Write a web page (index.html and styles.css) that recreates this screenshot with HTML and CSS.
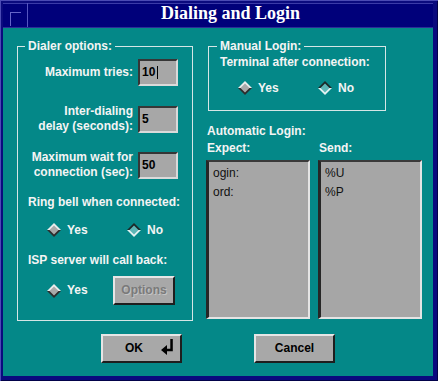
FILE: index.html
```html
<!DOCTYPE html>
<html>
<head>
<meta charset="utf-8">
<title>Dialing and Login</title>
<link rel="stylesheet" href="styles.css">
</head>
<body>
<div class="window">
  <div class="titlebar">
    <div class="menubtn"><span class="menuglyph"></span></div>
    <div class="title">Dialing and Login</div>
  </div>
  <div class="content">
    <div class="columns">
      <fieldset class="group dialer">
        <legend>Dialer options:</legend>
        <div class="field f1"><label>Maximum tries:</label><div class="entry">10<span class="caret"></span></div></div>
        <div class="field f2"><label>Inter-dialing<br>delay (seconds):</label><div class="entry">5</div></div>
        <div class="field f3"><label>Maximum wait for<br>connection (sec):</label><div class="entry">50</div></div>
        <div class="caption ring">Ring bell when connected:</div>
        <div class="radios r1">
          <span class="radio"><svg class="dia" width="14" height="14" viewBox="0 0 14 14"><polygon points="0,7 7,0 14,7" fill="#ececec"/><polygon points="0,7 7,14 14,7" fill="#2c2c2c"/><polygon points="7,2.5 11.5,7 7,11.5 2.5,7" fill="#a9a9a9"/></svg>Yes</span>
          <span class="radio"><svg class="dia" width="14" height="14" viewBox="0 0 14 14"><polygon points="0,7 7,0 14,7" fill="#1c2828"/><polygon points="0,7 7,14 14,7" fill="#e4f2f2"/><polygon points="7,2.5 11.5,7 7,11.5 2.5,7" fill="#5cb6b6"/></svg>No</span>
        </div>
        <div class="caption isp">ISP server will call back:</div>
        <div class="radios r2">
          <span class="radio"><svg class="dia" width="14" height="14" viewBox="0 0 14 14"><polygon points="0,7 7,0 14,7" fill="#ececec"/><polygon points="0,7 7,14 14,7" fill="#2c2c2c"/><polygon points="7,2.5 11.5,7 7,11.5 2.5,7" fill="#a9a9a9"/></svg>Yes</span>
          <span class="btn options">Options</span>
        </div>
      </fieldset>
      <div class="right">
        <fieldset class="group manual">
          <legend>Manual Login:</legend>
          <div class="caption">Terminal after connection:</div>
          <div class="radios r3">
            <span class="radio"><svg class="dia" width="14" height="14" viewBox="0 0 14 14"><polygon points="0,7 7,0 14,7" fill="#ececec"/><polygon points="0,7 7,14 14,7" fill="#2c2c2c"/><polygon points="7,2.5 11.5,7 7,11.5 2.5,7" fill="#a9a9a9"/></svg>Yes</span>
            <span class="radio"><svg class="dia" width="14" height="14" viewBox="0 0 14 14"><polygon points="0,7 7,0 14,7" fill="#1c2828"/><polygon points="0,7 7,14 14,7" fill="#e4f2f2"/><polygon points="7,2.5 11.5,7 7,11.5 2.5,7" fill="#5cb6b6"/></svg>No</span>
          </div>
        </fieldset>
        <div class="caption auto">Automatic Login:</div>
        <div class="lists">
          <div class="listlabel">Expect:</div>
          <div class="listlabel">Send:</div>
          <div class="listbox"><div class="item">ogin:</div><div class="item">ord:</div></div>
          <div class="listbox"><div class="item">%U</div><div class="item">%P</div></div>
        </div>
      </div>
    </div>
    <div class="buttons">
      <span class="btn ok">OK<svg class="enter" width="12" height="16" viewBox="0 0 12 16"><polygon points="0,11 6,6 6,9.7 9.3,9.7 9.3,0 11.8,0 11.8,12.3 6,12.3 6,16" fill="#000"/></svg></span>
      <span class="btn cancel">Cancel</span>
    </div>
  </div>
</div>
</body>
</html>
```

FILE: styles.css
```css
* { box-sizing: border-box; }
html, body { margin: 0; padding: 0; background: #0a0a7e; }
body {
  width: 438px;
  height: 381px;
  overflow: hidden;
  font-family: "Liberation Sans", Arial, sans-serif;
  font-size: 12px;
  line-height: 15px;
}
.window {
  width: 438px;
  height: 381px;
  background: #0a0a7e;
  padding: 3px 5px 5px 3px;
  display: flex;
  flex-direction: column;
  box-shadow: inset 1px 1px 0 #4a4ab4, inset -1px -1px 0 #02024a;
}
.titlebar {
  flex: none;
  height: 25px;
  display: flex;
  background: #00007a;
  border-bottom: 1px solid #2c2c98;
  box-shadow: inset 0 1px 0 #3a3aa8;
}
.menubtn {
  flex: none;
  width: 25px;
  border-right: 1px solid #5656c0;
  padding: 9px 0 0 7px;
}
.menuglyph {
  display: block;
  width: 11px;
  height: 14px;
  border-top: 1px solid #6464c8;
  border-left: 1px solid #6464c8;
}
.title {
  flex: 1;
  text-align: center;
  color: #ffffff;
  font-family: "Liberation Serif", "Times New Roman", serif;
  font-weight: bold;
  font-size: 18px;
  line-height: 20px;
}
.content {
  flex: 1;
  background: #048888;
  padding: 11px 0 0 14px;
  color: #f4f4f4;
  font-weight: bold;
}
.columns {
  display: flex;
  align-items: flex-start;
  gap: 13px;
}
.group {
  margin: 0;
  border: 1px solid #d6e6e6;
  min-width: 0;
}
.group legend {
  padding: 0 3px;
  margin-left: -3px;
  line-height: 15px;
}
.caption { white-space: nowrap; }
.dialer {
  width: 176px;
  padding: 5px 14px 15px 10px;
}
.field {
  display: flex;
  justify-content: flex-end;
  align-items: center;
}
.field label {
  text-align: right;
  margin-right: 5px;
}
.f1 { height: 27px; }
.f2 { margin-top: 18px; height: 30px; }
.f3 { margin-top: 16px; height: 30px; }
.entry {
  width: 40px;
  height: 27px;
  background: #a7a7a7;
  color: #000;
  border-style: solid;
  border-width: 2px;
  border-color: #363636 #dadada #dadada #363636;
  padding-left: 2px;
  display: flex;
  align-items: center;
}
.caret {
  display: inline-block;
  width: 1px;
  height: 13px;
  background: #000;
  margin-left: 2px;
}
.ring { margin-top: 15px; }
.radios {
  display: flex;
  align-items: center;
  padding-left: 19px;
}
.r1 { margin-top: 12px; height: 16px; }
.isp { margin-top: 15px; }
.r2 { margin-top: 8px; height: 29px; }
.radio {
  display: flex;
  align-items: center;
  gap: 6px;
  width: 80px;
  flex: none;
}
.r2 .radio { width: 66px; }
.dia { display: block; flex: none; }
.btn {
  display: flex;
  align-items: center;
  justify-content: center;
  background: #a8a8a8;
  color: #000;
  border-style: solid;
  border-width: 2px;
  border-color: #e6e6e6 #1e1e1e #1e1e1e #e6e6e6;
  font-weight: bold;
}
.options {
  width: 62px;
  height: 29px;
  color: #7a7a7a;
  text-shadow: 1px 1px 0 #c4c4c4;
}
.right {
  width: 216px;
  display: flex;
  flex-direction: column;
}
.manual {
  width: 178px;
  margin-left: 2px;
  padding: 1px 0 14px 11px;
}
.r3 { margin-top: 10px; height: 16px; padding-left: 18px; }
.auto { margin-top: 13px; padding-left: 1px; }
.lists {
  margin-top: 2px;
  display: grid;
  grid-template-columns: 104px 104px;
  column-gap: 8px;
  row-gap: 4px;
}
.listlabel { padding-left: 1px; }
.listbox {
  height: 159px;
  background: #a6a6a6;
  border-style: solid;
  border-width: 2px 2px 2px 3px;
  border-color: #3a3a3a #e4e4e4 #e4e4e4 #262626;
  padding: 2px 0 0 4px;
  color: #111;
  font-weight: normal;
}
.listbox .item { line-height: 19px; }
.buttons {
  margin-top: 13px;
  margin-left: -14px;
  display: flex;
  justify-content: center;
  gap: 72px;
}
.buttons .btn {
  width: 81px;
  height: 29px;
}
.ok {
  justify-content: flex-start;
  padding-left: 22px;
}
.enter {
  display: block;
  margin-left: 18px;
  margin-top: -4px;
}
```
